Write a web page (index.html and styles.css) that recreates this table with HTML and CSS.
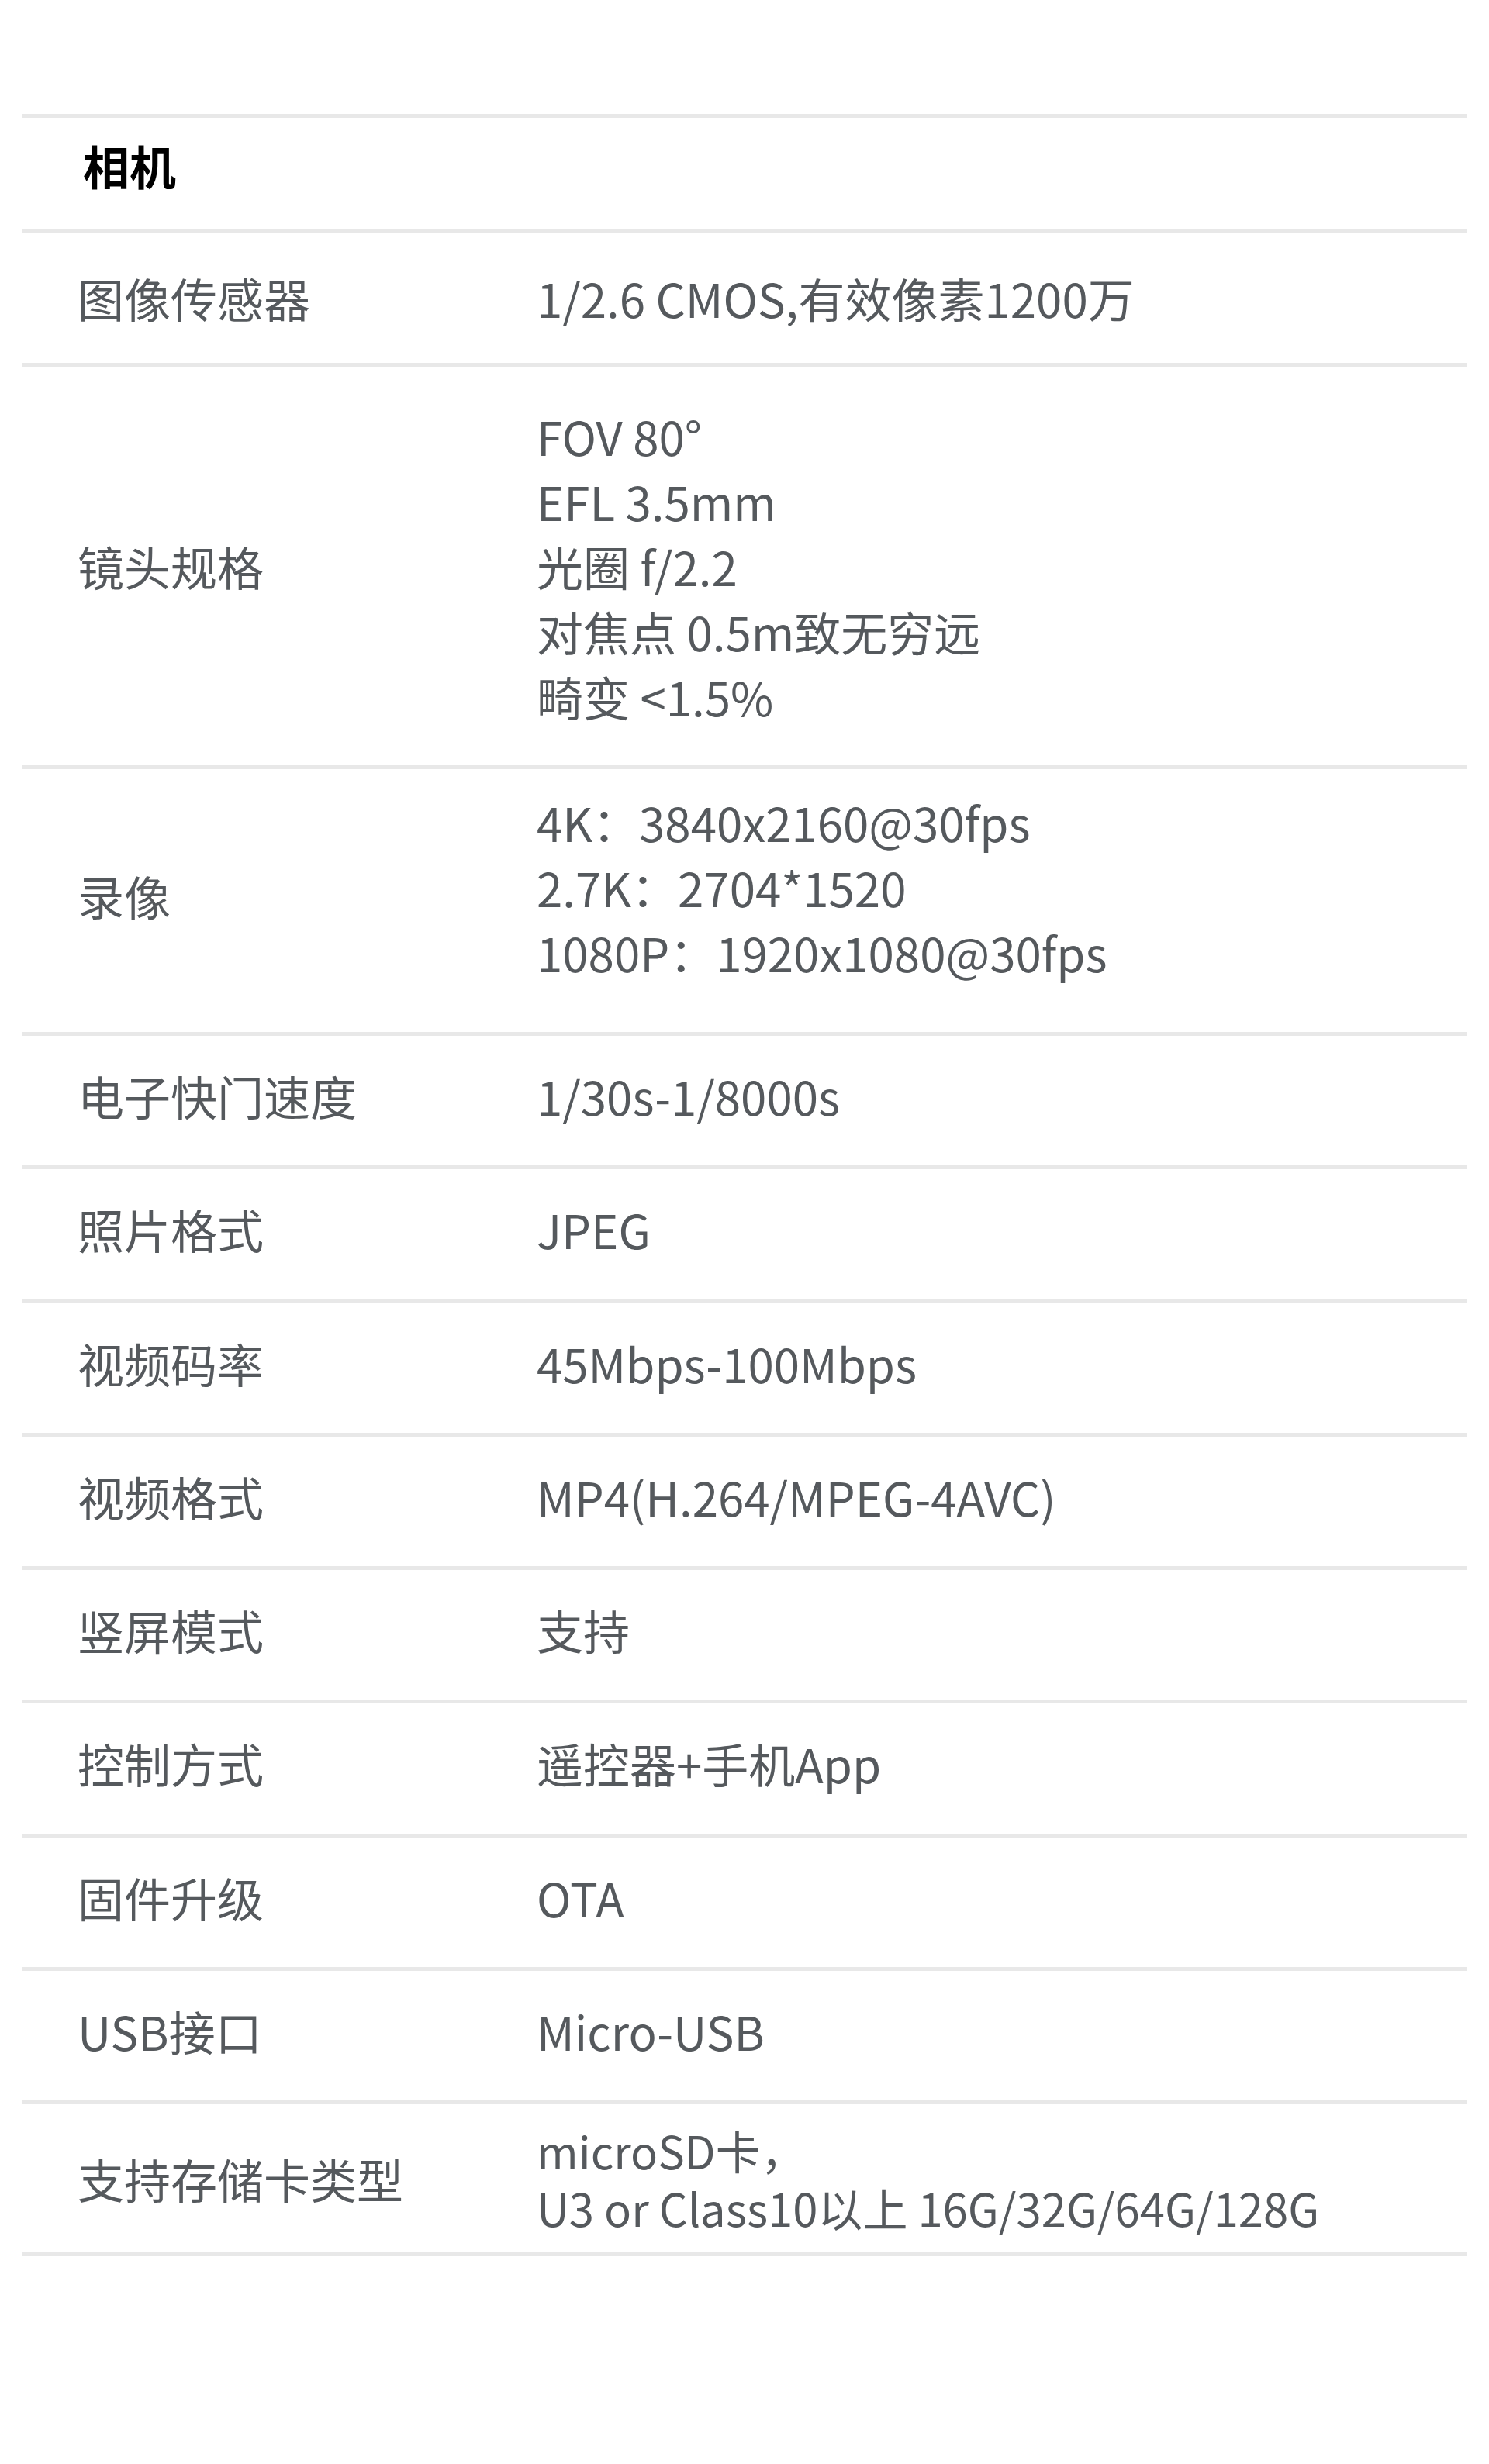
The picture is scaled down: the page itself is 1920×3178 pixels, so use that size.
FILE: index.html
```html
<!DOCTYPE html>
<html lang="zh-CN">
<head>
    <meta charset="UTF-8">
    <meta name="viewport" content="width=device-width, initial-scale=1.0">
    <title>相机参数</title>
    <link rel="stylesheet" href="styles.css">
</head>
<body>
    <div class="spec">
        <div class="spec-head">相机</div>
        <div class="spec-row sensor">
            <div class="spec-label">图像传感器</div>
            <div class="spec-value">1/2.6 CMOS,有效像素1200万</div>
        </div>
        <div class="spec-row lens">
            <div class="spec-label">镜头规格</div>
            <div class="spec-value">FOV 80°<br>EFL 3.5mm<br>光圈 f/2.2<br>对焦点 0.5m致无穷远<br>畸变 &lt;1.5%</div>
        </div>
        <div class="spec-row video">
            <div class="spec-label">录像</div>
            <div class="spec-value">4K：3840x2160@30fps<br>2.7K：2704*1520<br>1080P：1920x1080@30fps</div>
        </div>
        <div class="spec-row">
            <div class="spec-label">电子快门速度</div>
            <div class="spec-value">1/30s-1/8000s</div>
        </div>
        <div class="spec-row">
            <div class="spec-label">照片格式</div>
            <div class="spec-value">JPEG</div>
        </div>
        <div class="spec-row">
            <div class="spec-label">视频码率</div>
            <div class="spec-value">45Mbps-100Mbps</div>
        </div>
        <div class="spec-row">
            <div class="spec-label">视频格式</div>
            <div class="spec-value">MP4(H.264/MPEG-4AVC)</div>
        </div>
        <div class="spec-row">
            <div class="spec-label">竖屏模式</div>
            <div class="spec-value">支持</div>
        </div>
        <div class="spec-row">
            <div class="spec-label">控制方式</div>
            <div class="spec-value">遥控器+手机App</div>
        </div>
        <div class="spec-row">
            <div class="spec-label">固件升级</div>
            <div class="spec-value">OTA</div>
        </div>
        <div class="spec-row">
            <div class="spec-label">USB接口</div>
            <div class="spec-value">Micro-USB</div>
        </div>
        <div class="spec-row card">
            <div class="spec-label">支持存储卡类型</div>
            <div class="spec-value">microSD卡，<br>U3 or Class10以上 16G/32G/64G/128G</div>
        </div>
    </div>
</body>
</html>
```

FILE: styles.css
```css
body {
    margin: 0;
    background: #fff;
    font-family: "Noto Sans CJK SC", "Noto Sans", sans-serif;
    color: #55595d;
}
.spec {
    margin: 147px 29px 0;
    border-top: 5px solid #e8e8e8;
}
.spec-head {
    padding: 19px 0 40px 78px;
    font-size: 60px;
    line-height: 84px;
    font-weight: 700;
    color: #000;
    border-bottom: 5px solid #e8e8e8;
}
.spec-row {
    display: flex;
    align-items: center;
    padding: 35px 0 48.25px 71px;
    font-size: 60px;
    line-height: 84px;
    border-bottom: 5px solid #e8e8e8;
}
.spec-label {
    width: 592px;
    flex-shrink: 0;
}
.spec-row.sensor {
    padding-top: 42px;
    padding-bottom: 42px;
}
.spec-row.lens {
    padding-top: 47px;
    padding-bottom: 47px;
}
.spec-row.video {
    align-items: flex-start;
    padding-top: 26px;
    padding-bottom: 61px;
}
.spec-row.video .spec-label {
    margin-top: 95px;
}
.spec-row.card {
    min-height: 191px;
    padding-top: 0;
    padding-bottom: 0;
}
.spec-row.card .spec-value {
    font-size: 58px;
    line-height: 74px;
}
```
